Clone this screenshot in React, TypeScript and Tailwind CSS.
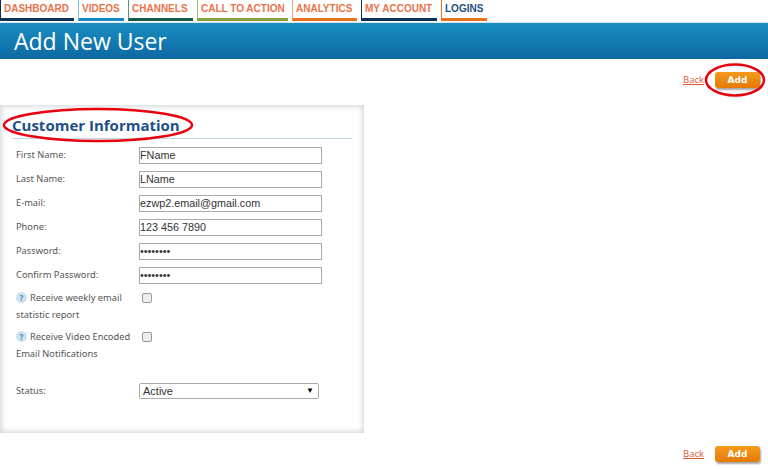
import type { ReactNode } from 'react'

const tabs = [
  { label: 'DASHBOARD', w: 'w-[74px]', cls: 'border-[#0f2f52]', left: 'border-l-[#0f2f52]' },
  { label: 'VIDEOS', w: 'w-[46px]', cls: 'border-[#1188c2]', left: 'border-l-[#7fc0e0]' },
  { label: 'CHANNELS', w: 'w-[65px]', cls: 'border-[#16594a]', left: 'border-l-[#5f8f84]' },
  { label: 'CALL TO ACTION', w: 'w-[91px]', cls: 'border-[#8a9d38]', left: 'border-l-[#a5b56a]' },
  { label: 'ANALYTICS', w: 'w-[65px]', cls: 'border-[#e8701f]', left: 'border-l-[#f0a878]' },
  { label: 'MY ACCOUNT', w: 'w-[76px]', cls: 'border-[#0f2f52]', left: 'border-l-[#0f2f52]' },
  { label: 'LOGINS', w: 'w-[46px]', cls: 'border-[#e8701f]', left: 'border-l-[#e8701f]' },
]

function Actions() {
  return (
    <div className="flex items-center gap-[11px]">
      <a href="#" className="text-[9.5px] leading-none text-[#e0573a] underline font-['Open_Sans',sans-serif]">Back</a>
      <button className="h-[16px] w-[45px] rounded-[3px] bg-gradient-to-b from-[#f59a1a] to-[#e47a06] text-[9px] font-bold leading-none text-white shadow-[1px_2px_2px_rgba(0,0,0,0.35)] font-['DejaVu_Sans',sans-serif]">
        Add
      </button>
    </div>
  )
}

function Row({ label, children }: { label: string; children: ReactNode }) {
  return (
    <div className="flex h-[24px] items-center">
      <label className="w-[123px] text-[9.3px] text-[#555] font-['Noto_Sans',sans-serif]">{label}</label>
      {children}
    </div>
  )
}

function Field({ value, type = 'text' }: { value: string; type?: string }) {
  return (
    <input
      type={type}
      defaultValue={value}
      className="h-[17px] w-[183px] border border-[#aaa] bg-white px-0 text-[10.8px] text-[#333] font-['Liberation_Sans',sans-serif] outline-none"
    />
  )
}

function Help() {
  return (
    <span className="mr-[3px] inline-flex h-[11px] w-[11px] items-center justify-center rounded-full bg-[#cfe3ee] text-[8px] font-bold leading-none text-[#3f8fbd]">
      ?
    </span>
  )
}

function CheckRow({ first, second }: { first: string; second: string }) {
  return (
    <div className="h-[39px] text-[9.3px] leading-[17px] text-[#555] font-['Noto_Sans',sans-serif]">
      <div className="flex items-center">
        <span className="flex w-[126px] items-center whitespace-nowrap">
          <Help />
          {first}
        </span>
        <span className="h-[10px] w-[10px] rounded-[2px] border border-[#999] bg-[#eee]" />
      </div>
      <div>{second}</div>
    </div>
  )
}

export default function App() {
  return (
    <div className="relative h-[469px] w-[768px] overflow-hidden bg-white">
      <nav className="flex h-[23px] gap-[4px] border-b border-[#dde3e8]">
        {tabs.map((t) => (
          <div
            key={t.label}
            className={`h-[21px] ${t.w} border-b-[3px] border-l ${t.cls} ${t.left} pl-[3px] pt-[3px] text-[10px] font-bold leading-[12px] whitespace-nowrap font-['Liberation_Sans',sans-serif] ${t.label === 'LOGINS' ? 'text-[#23507c]' : 'text-[#e8734a]'}`}
          >
            {t.label}
          </div>
        ))}
      </nav>

      <header className="flex h-[36px] items-center bg-gradient-to-b from-[#1a8fc2] to-[#0e68a2] pl-[14px]">
        <h1 className="text-[23px] font-normal leading-none text-white font-['Open_Sans',sans-serif]">Add New User</h1>
      </header>

      <div className="flex h-[46px] items-start justify-end pr-[8px] pt-[13px]">
        <Actions />
      </div>

      <section className="h-[328px] w-[364px] bg-white px-[12px] pt-[8px] shadow-[inset_-3px_0_4px_rgba(120,130,140,0.16),inset_3px_3px_4px_rgba(120,130,140,0.16),inset_0_-3px_4px_rgba(120,130,140,0.16)]">
        <h2 className="h-[26px] border-b border-[#c5d8e6] text-[15px] font-bold leading-[25px] text-[#1d4f87] font-['Open_Sans',sans-serif]">
          Customer Information
        </h2>
        <div className="mt-[4px] pl-[4px]">
          <Row label="First Name:"><Field value="FName" /></Row>
          <Row label="Last Name:"><Field value="LName" /></Row>
          <Row label="E-mail:"><Field value="ezwp2.email@gmail.com" /></Row>
          <Row label="Phone:"><Field value="123 456 7890" /></Row>
          <Row label="Password:"><Field value="password" type="password" /></Row>
          <Row label="Confirm Password:"><Field value="password" type="password" /></Row>
          <div className="mt-[2px]">
            <CheckRow first="Receive weekly email" second="statistic report" />
            <CheckRow first="Receive Video Encoded" second="Email Notifications" />
          </div>
          <div className="mt-[12px]">
            <Row label="Status:">
              <div className="flex h-[16px] w-[180px] items-center justify-between rounded-[2px] border border-[#aaa] bg-white pl-[3px] pr-[4px] text-[11px] text-[#333] font-['Liberation_Sans',sans-serif]">
                Active
                <span className="text-[8px] leading-none text-black">▼</span>
              </div>
            </Row>
          </div>
        </div>
      </section>

      <div className="flex h-[36px] items-start justify-end pr-[8px] pt-[13px]">
        <Actions />
      </div>

      {/* red hand-drawn circles on top of the screenshot */}
      <svg className="pointer-events-none absolute left-0 top-0" width="768" height="469" fill="none" stroke="#e8000f" strokeWidth="2.5">
        <ellipse cx="98" cy="125" rx="94" ry="16" />
        <ellipse cx="735" cy="80" rx="29" ry="15.5" />
      </svg>
    </div>
  )
}
